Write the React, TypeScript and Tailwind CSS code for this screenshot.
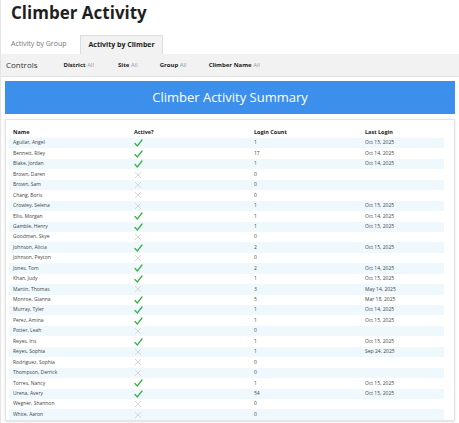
const rows: [string, boolean, string, string][] = [
  ["Aguilar, Angel", true, "1", "Oct 15, 2025"],
  ["Bennett, Riley", true, "17", "Oct 14, 2025"],
  ["Blake, Jordan", true, "1", "Oct 14, 2025"],
  ["Brown, Daren", false, "0", ""],
  ["Brown, Sam", false, "0", ""],
  ["Chang, Boris", false, "0", ""],
  ["Crowley, Selena", false, "1", "Oct 15, 2025"],
  ["Ellis, Morgan", true, "1", "Oct 14, 2025"],
  ["Gamble, Henry", true, "1", "Oct 15, 2025"],
  ["Goodman, Skye", false, "0", ""],
  ["Johnson, Alicia", true, "2", "Oct 15, 2025"],
  ["Johnson, Peyton", false, "0", ""],
  ["Jones, Tom", true, "2", "Oct 14, 2025"],
  ["Khan, Judy", true, "1", "Oct 15, 2025"],
  ["Martin, Thomas", false, "3", "May 14, 2025"],
  ["Monroe, Gianna", true, "5", "Mar 18, 2025"],
  ["Murray, Tyler", true, "1", "Oct 14, 2025"],
  ["Perez, Amina", true, "1", "Oct 15, 2025"],
  ["Potter, Leah", false, "0", ""],
  ["Reyes, Iris", true, "1", "Oct 15, 2025"],
  ["Reyes, Sophia", false, "1", "Sep 24, 2025"],
  ["Rodriguez, Sophia", false, "0", ""],
  ["Thompson, Derrick", false, "0", ""],
  ["Torres, Nancy", true, "1", "Oct 15, 2025"],
  ["Urena, Avery", true, "54", "Oct 15, 2025"],
  ["Wegner, Shannon", false, "0", ""],
  ["White, Aaron", false, "0", ""],
];

function Check() {
  return (
    <svg width="9" height="8" viewBox="0 0 9 8">
      <path d="M1 4.5 L3.3 7 L8 1" fill="none" stroke="#3cb04a" strokeWidth="1.3" strokeLinecap="round" />
    </svg>
  );
}
function Cross() {
  return (
    <svg width="8" height="8" viewBox="0 0 8 8">
      <path d="M1 1 L7 7 M7 1 L1 7" fill="none" stroke="#d6d6d6" strokeWidth="1" />
    </svg>
  );
}

export default function App() {
  return (
    <div className="w-[459px] h-[423px] overflow-hidden bg-white border-l border-[#e5e5e5] text-[#222]" style={{ fontFamily: '"Open Sans", sans-serif' }}>
      <div className="h-[34px] pl-[10px] pt-[2px] text-[17px] font-bold leading-[22px] text-[#1f1f1f]">Climber Activity</div>
      <div className="flex h-[20px] items-end text-[7px]">
        <div className="px-[10px] h-[19px] flex items-center text-[#777]">Activity by Group</div>
        <div className="ml-[4px] px-[7px] h-[19px] flex items-center font-bold bg-[#f2f2f2] border border-b-0 border-[#ddd]">Activity by Climber</div>
      </div>
      <div className="h-[23px] bg-[#f2f2f2] border-b border-[#e2e2e2] flex items-center pl-[5px] text-[7px]">
        <span className="text-[8px] text-[#333] mr-[26px]">Controls</span>
        <span className="font-bold text-[6px] mr-[24px]">District <span className="font-normal text-[#999]">All</span></span>
        <span className="font-bold text-[6px] mr-[22px]">Site <span className="font-normal text-[#999]">All</span></span>
        <span className="font-bold text-[6px] mr-[22px]">Group <span className="font-normal text-[#999]">All</span></span>
        <span className="font-bold text-[6px]">Climber Name <span className="font-normal text-[#999]">All</span></span>
      </div>
      <div className="mx-[4px] mt-[4px] h-[33px] bg-[#3c8fea] flex items-center justify-center text-white text-[13px]">Climber Activity Summary</div>
      <div className="mx-[4px] mt-[5px] border border-[#e5e5e5] shadow-sm px-[3px] pt-[6px]">
        <div className="flex h-[12px] items-center text-[5.5px] font-bold px-[4px]">
          <div className="w-[121px]">Name</div>
          <div className="w-[120px]">Active?</div>
          <div className="w-[111px]">Login Count</div>
          <div>Last Login</div>
        </div>
        {rows.map((r, i) => (
          <div key={i} className={`flex h-[10.45px] items-center text-[5px] text-[#444] px-[4px] mr-[7px] ${i % 2 === 0 ? "bg-[#eff9fd]" : "bg-white"}`}>
            <div className="w-[121px]">{r[0]}</div>
            <div className="w-[120px] flex items-center">{r[1] ? <Check /> : <Cross />}</div>
            <div className="w-[111px]">{r[2]}</div>
            <div>{r[3]}</div>
          </div>
        ))}
      </div>
    </div>
  );
}
